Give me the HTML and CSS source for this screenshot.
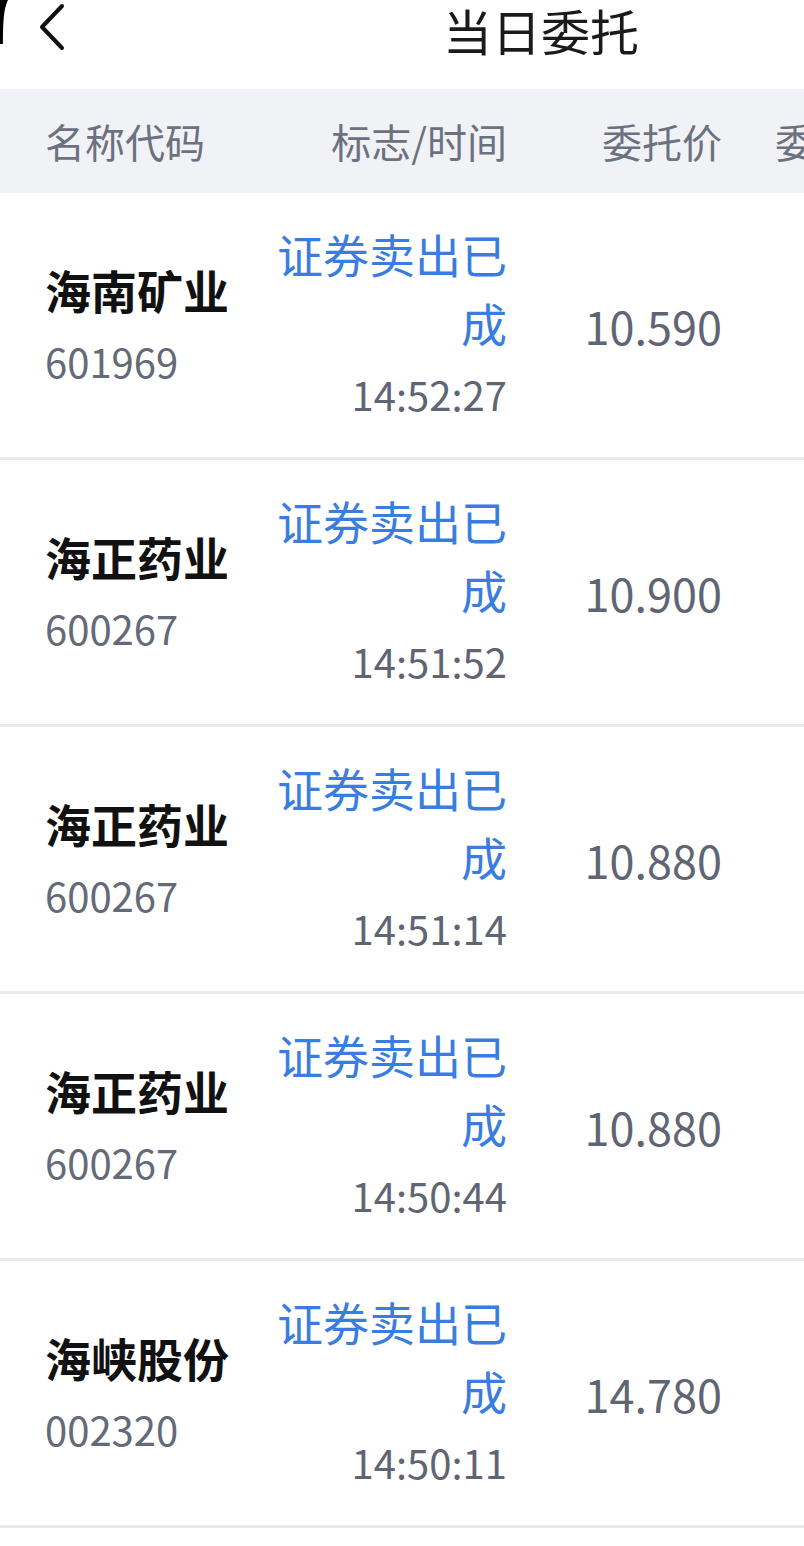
FILE: index.html
```html
<!DOCTYPE html>
<html lang="zh-CN">

<head>
    <meta charset="UTF-8">
    <meta name="viewport" content="width=device-width, initial-scale=1.0">
    <title>当日委托</title>
    <link rel="stylesheet" href="styles.css">
</head>

<body>
    <div class="page">
        <!-- 屏幕圆角 -->
        <svg class="corner" width="8" height="44" viewBox="0 0 8 44">
            <path d="M0 0 H8 C4 8 3 20 3 44 H0 Z" fill="#000" />
        </svg>

        <div class="topbar">
            <a class="back">
                <svg width="30" height="50" viewBox="0 0 30 50">
                    <path d="M24 4 L4 25 L24 46" fill="none" stroke="#111" stroke-width="4" stroke-linecap="round" stroke-linejoin="round" />
                </svg>
            </a>
            <h1 class="title">当日委托</h1>
        </div>

        <div class="table">
            <div class="thead row-grid">
                <div class="col-name">名称代码</div>
                <div class="col-flag">标志/时间</div>
                <div class="col-price">委托价</div>
                <div class="col-qty">委托数量</div>
            </div>

            <div class="tr row-grid">
                <div class="col-name">
                    <div class="stock">海南矿业</div>
                    <div class="code">601969</div>
                </div>
                <div class="col-flag">
                    <div class="flag">证券卖出已成</div>
                    <div class="time">14:52:27</div>
                </div>
                <div class="col-price price">10.590</div>
                <div class="col-qty"></div>
            </div>

            <div class="tr row-grid">
                <div class="col-name">
                    <div class="stock">海正药业</div>
                    <div class="code">600267</div>
                </div>
                <div class="col-flag">
                    <div class="flag">证券卖出已成</div>
                    <div class="time">14:51:52</div>
                </div>
                <div class="col-price price">10.900</div>
                <div class="col-qty"></div>
            </div>

            <div class="tr row-grid">
                <div class="col-name">
                    <div class="stock">海正药业</div>
                    <div class="code">600267</div>
                </div>
                <div class="col-flag">
                    <div class="flag">证券卖出已成</div>
                    <div class="time">14:51:14</div>
                </div>
                <div class="col-price price">10.880</div>
                <div class="col-qty"></div>
            </div>

            <div class="tr row-grid">
                <div class="col-name">
                    <div class="stock">海正药业</div>
                    <div class="code">600267</div>
                </div>
                <div class="col-flag">
                    <div class="flag">证券卖出已成</div>
                    <div class="time">14:50:44</div>
                </div>
                <div class="col-price price">10.880</div>
                <div class="col-qty"></div>
            </div>

            <div class="tr row-grid">
                <div class="col-name">
                    <div class="stock">海峡股份</div>
                    <div class="code">002320</div>
                </div>
                <div class="col-flag">
                    <div class="flag">证券卖出已成</div>
                    <div class="time">14:50:11</div>
                </div>
                <div class="col-price price">14.780</div>
                <div class="col-qty"></div>
            </div>
        </div>
    </div>
</body>

</html>
```

FILE: styles.css
```css
* {
    margin: 0;
    padding: 0;
    box-sizing: border-box;
}

body {
    background: #fff;
    font-family: "Noto Sans CJK SC", "Noto Sans", sans-serif;
    overflow: hidden;
}

.page {
    position: relative;
    width: 804px;
    overflow: hidden;
}

.corner {
    position: absolute;
    left: 0;
    top: 0;
}

/* 顶部标题栏 */
.topbar {
    height: 89px;
    display: flex;
    align-items: flex-start;
    padding-left: 38px;
    padding-top: 2px;
}

.back {
    display: flex;
    width: 30px;
}

.title {
    margin-left: 375px;
    font-size: 49px;
    font-weight: 400;
    color: #1a1a1a;
    line-height: 56px;
}

/* 表格 */
.table {
    width: 1000px;
}

.row-grid {
    display: grid;
    grid-template-columns: 212px 250px 215px 213px;
    padding-left: 45px;
    align-items: center;
}

.thead {
    height: 104px;
    background: #f1f2f6;
    font-size: 40px;
    color: #6b717f;
}

.col-flag,
.col-price,
.col-qty {
    text-align: right;
}

.tr {
    height: 267px;
    border-bottom: 3px solid #e7e9ec;
}

.stock {
    font-size: 46px;
    font-weight: 700;
    color: #111;
    line-height: 72px;
}

.code {
    font-size: 40px;
    color: #646a77;
    line-height: 72px;
}

.flag {
    font-size: 46px;
    color: #3a7de0;
    line-height: 69px;
}

.time {
    font-size: 40px;
    color: #5f6573;
    line-height: 74px;
}

.price {
    font-size: 45px;
    color: #5f6573;
}
```
